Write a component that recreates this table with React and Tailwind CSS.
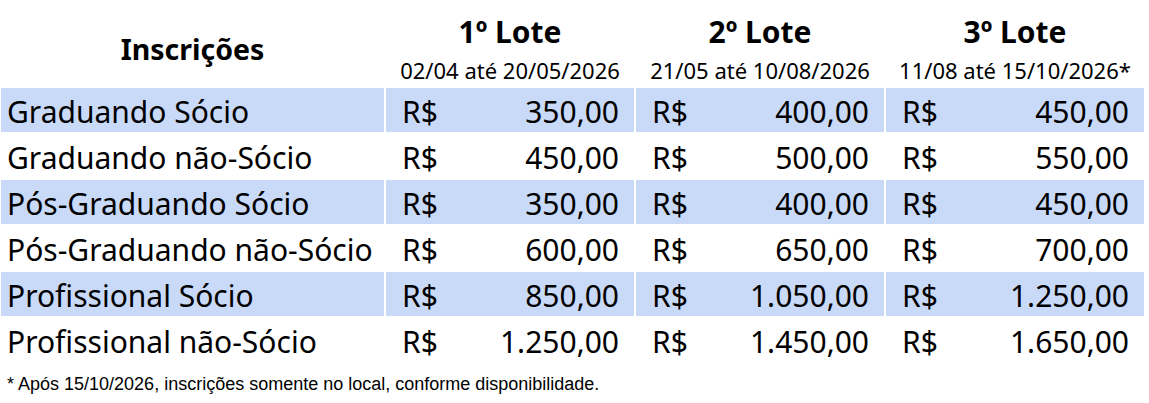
import React from "react";

const rows = [
  { label: "Graduando Sócio", v: ["350,00", "400,00", "450,00"], shade: true },
  { label: "Graduando não-Sócio", v: ["450,00", "500,00", "550,00"], shade: false },
  { label: "Pós-Graduando Sócio", v: ["350,00", "400,00", "450,00"], shade: true },
  { label: "Pós-Graduando não-Sócio", v: ["600,00", "650,00", "700,00"], shade: false },
  { label: "Profissional Sócio", v: ["850,00", "1.050,00", "1.250,00"], shade: true },
  { label: "Profissional não-Sócio", v: ["1.250,00", "1.450,00", "1.650,00"], shade: false },
];

const lotes = [
  { t: "1º Lote", d: "02/04 até 20/05/2026" },
  { t: "2º Lote", d: "21/05 até 10/08/2026" },
  { t: "3º Lote", d: "11/08 até 15/10/2026*" },
];

export default function App() {
  return (
    <div className="w-[1149px] h-[403px] bg-white text-black overflow-hidden" style={{ fontFamily: '"Noto Sans", sans-serif' }}>
      <div className="ml-px pt-[12px] grid grid-cols-[383px_248px_248px_258px] gap-x-[2px] gap-y-[2px]">
        <div className="row-span-2 flex items-center justify-center text-[28.5px] font-bold leading-none">Inscrições</div>
        {lotes.map((l) => (
          <div key={l.t} className="flex items-center justify-center h-[40px] text-[30px] font-bold leading-none">{l.t}</div>
        ))}
        {lotes.map((l) => (
          <div key={l.d} className="flex items-center justify-center h-[32px] text-[22px] leading-none">{l.d}</div>
        ))}
        {rows.map((r) => (
          <React.Fragment key={r.label}>
            <div className={`h-[44px] flex items-center pt-[4px] pl-[6px] text-[30px] leading-none ${r.shade ? "bg-[#c9daf8]" : ""}`}>{r.label}</div>
            {r.v.map((v, i) => (
              <div key={i} className={`h-[44px] flex items-center justify-between pt-[4px] pl-[16px] pr-[15px] text-[30px] leading-none ${r.shade ? "bg-[#c9daf8]" : ""}`}>
                <span>R$</span>
                <span>{v}</span>
              </div>
            ))}
          </React.Fragment>
        ))}
      </div>
      <div className="pl-[7px] mt-[13px] text-[18px] leading-none" style={{ fontFamily: '"Liberation Sans", Arial, sans-serif' }}>
        * Após 15/10/2026, inscrições somente no local, conforme disponibilidade.
      </div>
    </div>
  );
}
